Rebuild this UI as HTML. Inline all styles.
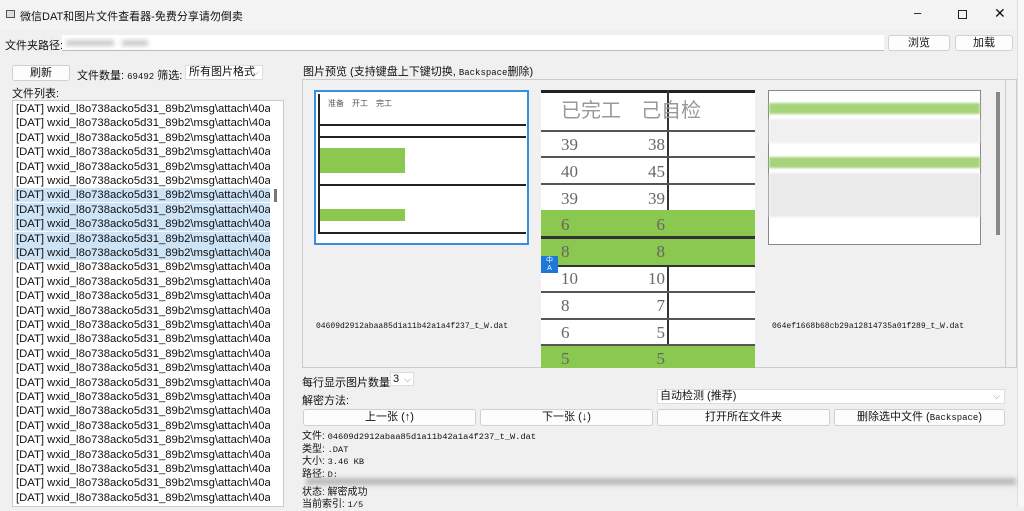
<!DOCTYPE html>
<html><head><meta charset="utf-8"><style>
*{box-sizing:border-box;margin:0;padding:0}
body{width:1024px;height:507px;overflow:hidden;background:#f0f0f0;font-family:"Liberation Sans","Noto Sans CJK SC",sans-serif;font-size:11px;color:#111;position:relative}
.a{position:absolute}
.btn{position:absolute;background:#fdfdfd;border:1px solid #d0d0d0;border-radius:3px;text-align:center;font-size:11px;line-height:14px}
.mono{font-family:"Liberation Mono","Noto Sans CJK SC",monospace;font-size:8px}
.row{position:absolute;left:14px;width:256px;height:14px;white-space:nowrap;overflow:hidden;font-size:11.3px;line-height:14px;padding-left:2px}
.sel{background:#cde4f7}
.g{background:#8bc850}
</style></head><body>
<div class="a" style="left:0;top:0;width:1024px;height:30px;background:#f3f3f3"></div>
<div class="a" style="left:6px;top:10px;width:9px;height:8px;border:1px solid #555;background:#ddd"></div>
<div class="a" style="left:20px;top:8px;font-size:11px">微信DAT和图片文件查看器-免费分享请勿倒卖</div>
<div class="a" style="left:914px;top:5px;font-size:13px">–</div>
<div class="a" style="left:958px;top:10px;width:9px;height:9px;border:1px solid #222"></div>
<div class="a" style="left:994px;top:5px;font-size:14px">✕</div>
<div class="a" style="left:1017px;top:0;width:7px;height:507px;background:#f7f7f7;border-left:1px solid #ddd"></div>

<div class="a" style="left:5px;top:37px">文件夹路径:</div>
<div class="a" style="left:62px;top:35px;width:822px;height:16px;background:#fff;border-bottom:1px solid #bbb"></div>
<div class="a" style="left:66px;top:40px;width:48px;height:6px;background:#ccc;filter:blur(2px)"></div>
<div class="a" style="left:122px;top:40px;width:26px;height:6px;background:#ccc;filter:blur(2px)"></div>
<div class="btn" style="left:888px;top:35px;width:62px;height:16px">浏览</div>
<div class="btn" style="left:955px;top:35px;width:58px;height:16px">加载</div>

<div class="btn" style="left:12px;top:65px;width:58px;height:16px">刷新</div>
<div class="a" style="left:77px;top:67px">文件数量: <span class="mono" style="font-size:9px">69492</span> 筛选:</div>
<div class="a" style="left:185px;top:65px;width:78px;height:15px;background:#fff;border:1px solid #ddd;padding-left:3px;line-height:13px;white-space:nowrap">所有图片格式<span style="position:absolute;right:3px;color:#888;font-size:9px">⌵</span></div>
<div class="a" style="left:12px;top:85px">文件列表:</div>
<div class="a" style="left:12px;top:100px;width:272px;height:407px;background:#fff;border:1px solid #ccc"></div>
<div class="a" style="left:274px;top:189px;width:3px;height:13px;background:#777"></div>
<div id="list"></div>

<div class="a" style="left:303px;top:63px">图片预览 (支持键盘上下键切换, <span class="mono" style="font-size:9px">Backspace</span>删除)</div>
<div class="a" style="left:302px;top:79px;width:715px;height:289px;background:#f0f0f0;border:1px solid #ccc"></div>
<div class="a" style="left:1005px;top:79px;width:1px;height:289px;background:#ccc"></div>
<div class="a" style="left:996px;top:92px;width:4px;height:143px;background:#888"></div>

<div class="a" style="left:314px;top:90px;width:215px;height:155px;border:2px solid #3a8ee0;background:#fff">
 <div class="a" style="left:2px;top:2px;width:2px;height:140px;background:#222"></div>
 <div class="a" style="left:2px;top:32px;width:208px;height:2px;background:#222"></div>
 <div class="a" style="left:2px;top:44px;width:208px;height:2px;background:#222"></div>
 <div class="a g" style="left:4px;top:56px;width:85px;height:25px"></div>
 <div class="a" style="left:2px;top:92px;width:208px;height:2px;background:#222"></div>
 <div class="a g" style="left:4px;top:117px;width:85px;height:12px"></div>
 <div class="a" style="left:2px;top:140px;width:208px;height:2px;background:#222"></div>
 <div class="a" style="left:12px;top:6px;font-size:8px;color:#555">准备　开工　完工</div>
</div>
<div class="a" style="left:541px;top:90px;width:214px;height:278px;background:#fff;overflow:hidden">
 <div class="a" style="left:0;top:0;width:214px;height:3px;background:#222"></div>
 <div class="a" style="left:126px;top:0;width:2px;height:278px;background:#333"></div>
 <div class="a" style="left:20px;top:4px;font-size:20px;color:#999;white-space:nowrap">已完工　己自检</div>
 <div class="a" style="left:0;top:40px;width:214px;height:2px;background:#555"></div>
 <div class="a" style="left:0;top:66px;width:214px;height:2px;background:#555"></div>
 <div class="a" style="left:0;top:93px;width:214px;height:2px;background:#555"></div>
 <div class="a g" style="left:0;top:120px;width:214px;height:26px"></div>
 <div class="a g" style="left:0;top:149px;width:214px;height:26px"></div>
 <div class="a" style="left:0;top:146px;width:214px;height:3px;background:#333"></div>
 <div class="a" style="left:0;top:175px;width:214px;height:2px;background:#333"></div>
 <div class="a" style="left:0;top:201px;width:214px;height:2px;background:#555"></div>
 <div class="a" style="left:0;top:228px;width:214px;height:2px;background:#555"></div>
 <div class="a" style="left:0;top:254px;width:214px;height:2px;background:#555"></div>
 <div class="a g" style="left:0;top:256px;width:214px;height:22px"></div>
 <div class="a" style="left:20px;top:42px;font-size:17px;line-height:26.8px;color:#666;font-family:'Liberation Serif',serif">39<br>40<br>39<br>6<br>8<br>10<br>8<br>6<br>5</div>
 <div class="a" style="left:102px;top:42px;width:22px;text-align:right;font-size:17px;line-height:26.8px;color:#666;font-family:'Liberation Serif',serif">38<br>45<br>39<br>6<br>8<br>10<br>7<br>5<br>5</div>
 <div class="a" style="left:0;top:166px;width:17px;height:17px;background:#1e78d7;color:#fff;font-size:7px;line-height:8px;text-align:center;padding-top:1px">中<br>A</div>
</div>
<div class="a" style="left:768px;top:90px;width:213px;height:155px;background:#fff;border:1px solid #888">
 <div class="a" style="left:0;top:12px;width:211px;height:11px;background:#a6d47a;filter:blur(1px)"></div>
 <div class="a" style="left:0;top:28px;width:211px;height:24px;background:#f0f0f0;filter:blur(1px)"></div>
 <div class="a" style="left:0;top:66px;width:211px;height:11px;background:#a6d47a;filter:blur(1px)"></div>
 <div class="a" style="left:0;top:82px;width:211px;height:44px;background:#eaeaea;filter:blur(1px)"></div>
</div>
<div class="a mono" style="left:316px;top:322px">04609d2912abaa85d1a11b42a1a4f237_t_W.dat</div>
<div class="a mono" style="left:772px;top:322px">064ef1668b68cb29a12814735a01f289_t_W.dat</div>

<div class="a" style="left:302px;top:374px">每行显示图片数量:</div>
<div class="a" style="left:390px;top:372px;width:24px;height:14px;background:#fff;border:1px solid #ddd;padding-left:2px;line-height:12px">3<span style="position:absolute;right:2px;color:#888;font-size:9px">⌵</span></div>
<div class="a" style="left:302px;top:392px">解密方法:</div>
<div class="a" style="left:657px;top:389px;width:348px;height:15px;background:#fff;border:1px solid #ddd;padding-left:2px;line-height:13px">自动检测 (推荐)<span style="position:absolute;right:4px;color:#888;font-size:9px">⌵</span></div>
<div class="btn" style="left:303px;top:409px;width:173px;height:17px">上一张 (↑)</div>
<div class="btn" style="left:480px;top:409px;width:173px;height:17px">下一张 (↓)</div>
<div class="btn" style="left:657px;top:409px;width:173px;height:17px">打开所在文件夹</div>
<div class="btn" style="left:834px;top:409px;width:171px;height:17px">删除选中文件 (<span class="mono" style="font-size:9px">Backspace</span>)</div>
<div class="a" style="left:302px;top:431px;line-height:11.5px;font-size:10px">文件: <span class="mono" style="font-size:8.7px">04609d2912abaa85d1a11b42a1a4f237_t_W.dat</span><br>类型: <span class="mono" style="font-size:8.7px">.DAT</span><br>大小: <span class="mono" style="font-size:8.7px">3.46 KB</span><br>路径: <span class="mono" style="font-size:8.7px">D:</span></div>
<div class="a" style="left:306px;top:478px;width:710px;height:7px;background:#bbb;filter:blur(2px)"></div>
<div class="a" style="left:302px;top:487px;line-height:11.5px;font-size:10px">状态: 解密成功<br>当前索引: <span class="mono" style="font-size:8.7px">1/5</span></div>
<script>
var h='';for(var i=0;i<28;i++){var t=102+i*14.4;h+='<div class="row'+(i>=6&&i<=10?' sel':'')+'" style="top:'+t+'px">[DAT] wxid_l8o738acko5d31_89b2\\msg\\attach\\40a7d4</div>'}
document.getElementById('list').innerHTML=h;
</script>
</body></html>
